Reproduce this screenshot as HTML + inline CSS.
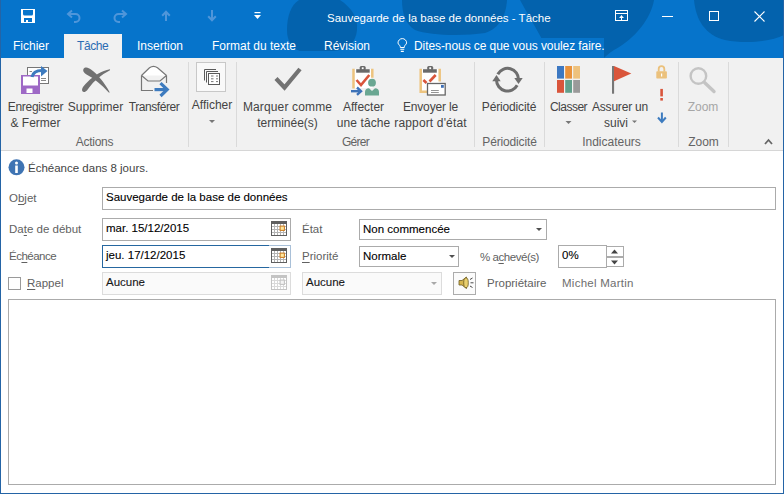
<!DOCTYPE html>
<html><head><meta charset="utf-8">
<style>
*{margin:0;padding:0;box-sizing:border-box}
html,body{width:784px;height:494px;overflow:hidden;background:#fff}
body{position:relative;font-family:"Liberation Sans",sans-serif;font-size:12px;color:#444}
.a{position:absolute}
.t{position:absolute;white-space:nowrap;line-height:14px;font-size:12px}
.w{color:#fff}
u{text-decoration:underline;text-underline-offset:1.5px;text-decoration-thickness:1px}
#frame{position:absolute;left:0;top:0;width:784px;height:494px;border:1px solid #2464a6;border-top:0;pointer-events:none}
#title{position:absolute;left:0;top:0;width:784px;height:58px;background:#0674cb;overflow:hidden}
#ribbon{position:absolute;left:0;top:58px;width:784px;height:93px;background:#f1f1f1;border-bottom:1px solid #d6d6d6}
.sep{position:absolute;width:1px;background:#dadada;top:4px;height:85px}
.rb{color:#444}
.lbl{color:#616161;font-size:11.5px}
.box{position:absolute;border:1px solid #abadb3;background:#fff}
.c{position:absolute;text-align:center;white-space:nowrap;line-height:14px;color:#444}
.gl{color:#646464}
.ft{position:absolute;white-space:nowrap;font-size:11.5px;line-height:14px;color:#000;-webkit-text-stroke:0.1px #000}
</style></head><body>
<div id="title">
  <svg class="a" style="left:0;top:0" width="784" height="58">
    <g fill="#0362ad">
      <path d="M299 0 H340 C352 8 358 18 357 30 C356 42 348 50 334 51 H300 C291 48 287 40 287 30 C287 16 291 5 299 0Z"/>
      <path d="M402 0 H507 C506 15 500 28 485 33 C465 36 430 36 415 30 C405 24 402 12 402 0Z"/>
      <path d="M520 0 H654 C651 18 636 38 614 50 C609 53 606 56 604 58 H552 C543 40 530 18 520 0Z"/>
      <path d="M694 0 H784 V35 C770 42 745 44 725 40 C705 35 696 20 694 0Z"/>
    </g>
  </svg>
  <!-- save icon -->
  <svg class="a" style="left:21px;top:9px" width="14" height="14">
    <rect x="0" y="0" width="14" height="14" fill="#fff"/>
    <path d="M2 1 H12 V5 Q12 6.6 10.5 6.6 H3.5 Q2 6.6 2 5Z" fill="#0674cb"/>
    <rect x="3" y="9" width="8" height="4" fill="#0674cb"/>
    <rect x="5" y="11" width="2" height="2" fill="#fff"/>
  </svg>
  <!-- undo -->
  <svg class="a" style="left:66px;top:9px" width="16" height="14">
    <path d="M3 5 H9.5 A4 4 0 0 1 9.5 13 H8" fill="none" stroke="#4f96da" stroke-width="2"/>
    <path d="M6 1.5 L2 5 L6 8.5" fill="none" stroke="#4f96da" stroke-width="2"/>
  </svg>
  <!-- redo -->
  <svg class="a" style="left:112px;top:9px" width="16" height="14">
    <path d="M13 5 H6.5 A4 4 0 0 0 6.5 13 H8" fill="none" stroke="#4f96da" stroke-width="2"/>
    <path d="M10 1.5 L14 5 L10 8.5" fill="none" stroke="#4f96da" stroke-width="2"/>
  </svg>
  <!-- up -->
  <svg class="a" style="left:161px;top:10px" width="10" height="12">
    <path d="M5 2 V11" stroke="#4f96da" stroke-width="2"/>
    <path d="M1.2 5.8 L5 1.8 L8.8 5.8" fill="none" stroke="#4f96da" stroke-width="2"/>
  </svg>
  <!-- down -->
  <svg class="a" style="left:207px;top:10px" width="10" height="12">
    <path d="M5 0 V10" stroke="#4f96da" stroke-width="2"/>
    <path d="M1.2 6.2 L5 10.2 L8.8 6.2" fill="none" stroke="#4f96da" stroke-width="2"/>
  </svg>
  <!-- customize -->
  <svg class="a" style="left:254px;top:12px" width="8" height="8">
    <rect x="0.5" y="0" width="6" height="1.2" fill="#fff"/>
    <path d="M0 3 H7 L3.5 7Z" fill="#fff"/>
  </svg>
  <div class="t w" style="left:327px;top:11px;font-size:11.5px">Sauvegarde de la base de données - Tâche</div>
  <!-- window controls -->
  <svg class="a" style="left:615px;top:10px" width="14" height="12">
    <rect x="0.5" y="0.5" width="12" height="10" fill="none" stroke="#fff"/>
    <path d="M0.5 3.5 H12.5" stroke="#fff"/>
    <path d="M6.5 10 V5.5" stroke="#fff"/><path d="M4 8 L6.5 5.2 L9 8Z" fill="#fff"/>
  </svg>
  <svg class="a" style="left:662px;top:16px" width="11" height="1"><rect x="0" y="0" width="11" height="1" fill="#fff"/></svg>
  <svg class="a" style="left:709px;top:11px" width="10" height="10"><rect x="0.5" y="0.5" width="9" height="9" fill="none" stroke="#fff"/></svg>
  <svg class="a" style="left:754px;top:11px" width="11" height="11"><path d="M0.5 0.5 L10.5 10.5 M10.5 0.5 L0.5 10.5" stroke="#fff" stroke-width="1.1"/></svg>
  <!-- tabs -->
  <div class="t w" style="left:13px;top:39px">Fichier</div>
  <div class="a" style="left:64px;top:34px;width:58px;height:24px;background:#f1f1f1"></div>
  <div class="t" style="left:77px;top:39px;color:#2b6cb3;letter-spacing:-0.4px">Tâche</div>
  <div class="t w" style="left:137px;top:39px">Insertion</div>
  <div class="t w" style="left:212px;top:39px">Format du texte</div>
  <div class="t w" style="left:324px;top:39px">Révision</div>
  <div class="a" style="left:392px;top:38px;width:212px;height:20px;background:#0674cb"></div>
  <svg class="a" style="left:397px;top:38px" width="12" height="15">
    <path d="M3.3 9.5 V8.8 C3.3 7.4 1 6.4 1 4.9 A4.3 4.3 0 1 1 9.6 4.9 C9.6 6.4 7.3 7.4 7.3 8.8 V9.5 Z" fill="none" stroke="#fff" stroke-width="1"/>
    <path d="M3.3 11.2 H7.3 M3.8 13.4 H6.8" stroke="#fff" stroke-width="1.1"/>
  </svg>
  <div class="t w" style="left:414px;top:39px;letter-spacing:-0.08px">Dites-nous ce que vous voulez faire.</div>
</div>


<div id="ribbon">
  <div class="sep" style="left:188px"></div>
  <div class="sep" style="left:236px"></div>
  <div class="sep" style="left:474px"></div>
  <div class="sep" style="left:544px"></div>
  <div class="sep" style="left:678px"></div>
  <div class="sep" style="left:728px"></div>
</div>
<svg class="a" style="left:0;top:58px" width="784" height="92">
 <g transform="translate(0,-58)">
  <!-- Enregistrer & Fermer -->
  <rect x="27.5" y="67.5" width="21" height="16" fill="#fff" stroke="#777" stroke-width="1"/>
  <path d="M41 78.5 H46 M41 80.5 H46 M29.5 71.5 H32" stroke="#888" stroke-width="1"/>
  <rect x="21" y="75" width="19" height="19" fill="#9e69c6"/>
  <rect x="23" y="76.5" width="15" height="9" fill="#fff"/>
  <rect x="26.5" y="88.5" width="6" height="4.5" fill="#fff"/>
  <path d="M32 77 C33 72 37 70.5 42 70.5" fill="none" stroke="#3d7bbf" stroke-width="3.2"/>
  <path d="M41 66 L47.5 71 L41 76.5Z" fill="#3d7bbf"/>
  <!-- Supprimer X -->
  <path d="M83.6 71.8 C82.6 69.6 83.8 67.5 86.4 67.6 C88 67.7 89.5 68.6 91 69.6 C98 74.5 104.5 83 109.8 92.4 C109.3 92.6 108.9 92.6 108.5 92.3 C101.5 84.5 94 78.5 86.5 74.5 C85.2 73.8 84.2 72.9 83.6 71.8Z" fill="#717171"/>
  <path d="M110 69.3 C110.2 69.8 110.1 70.3 109.6 70.6 C101 75 94 81 88.8 88 C87.6 89.8 86.4 91.4 84.8 91.9 C82.6 92.4 81.6 90.6 82.2 88.8 C83 86.5 85 84.4 87.5 82 C94 75.5 101.5 71 110 69.3Z" fill="#717171"/>
  <!-- Transferer -->
  <path d="M141.5 75.5 L149.5 67.8 Q153.5 65 157.5 67.8 L166.5 75.5" fill="#fff" stroke="#777" stroke-width="1.2"/>
  <path d="M141.5 75.5 V90.5 H153 M166.5 75.5 V83" fill="none" stroke="#777" stroke-width="1.2"/>
  <path d="M141.5 75.5 L148 81 H160 L166.5 75.5" fill="none" stroke="#777" stroke-width="1.2"/>
  <path d="M154.5 89.6 H167" stroke="#3d7bbf" stroke-width="3.2"/>
  <path d="M160.5 83.2 L167.2 89.6 L160.5 96" fill="none" stroke="#3d7bbf" stroke-width="3.2"/>
  <!-- Afficher box -->
  <rect x="196.5" y="62.5" width="29" height="29" fill="#f9f9f9" stroke="#c8c8c8"/>
  <path d="M204.5 80.5 V69.5 H216 M206.5 82.5 V71.5 H218" fill="none" stroke="#5a5a5a" stroke-width="1"/>
  <rect x="208.5" y="73.5" width="11" height="11" fill="#fff" stroke="#5a5a5a" stroke-width="1"/>
  <path d="M211 76 H213.5 M216 76 H218 M211 78.8 H213.5 M216 78.8 H218 M211 81.6 H213.5 M216 81.6 H218" stroke="#777" stroke-width="1"/>
  <path d="M209 120 H215 L212 123Z" fill="#777"/>
  <!-- Marquer check -->
  <path d="M276 78.5 L284.5 87.5 L300 69" fill="none" stroke="#737373" stroke-width="4.2"/>
  <!-- Affecter -->
  <rect x="353.5" y="69" width="19" height="19" fill="#fff"/>
  <path d="M353.5 68.8 V88.5 M372.3 68.8 V77.7" stroke="#edc47f" stroke-width="2.5"/>
  <path d="M356.2 69.2 H369.7 V72.7 H356.2Z" fill="#6a6a6a"/>
  <rect x="359.7" y="66" width="6" height="4.5" rx="1.5" fill="#6a6a6a"/>
  <rect x="361.8" y="67.3" width="1.8" height="1.8" fill="#fff"/>
  <path d="M356.5 80 L361 85 L369.3 75" fill="none" stroke="#d9553b" stroke-width="2.6"/>
  <circle cx="372" cy="82.7" r="3.9" fill="#6aa792"/>
  <path d="M365 95.5 V92 Q365 88.5 369 88.3 L372 91 L375 88.3 Q379 88.5 379 92 V95.5Z" fill="#6aa792"/>
  <path d="M351 91.2 H359.5" stroke="#3d72b8" stroke-width="2.4"/>
  <path d="M357 87.5 L361 91.2 L357 94.8" fill="none" stroke="#3d72b8" stroke-width="2.4"/>
  <!-- Envoyer rapport -->
  <rect x="420.5" y="69" width="19" height="23" fill="#fff"/>
  <path d="M420.7 68.8 V91.7 H427 M439.7 68.8 V81.5" fill="none" stroke="#edc47f" stroke-width="2.5"/>
  <path d="M423 69.2 H436.8 V72.7 H423Z" fill="#6a6a6a"/>
  <rect x="427.2" y="66" width="6" height="4.5" rx="1.5" fill="#6a6a6a"/>
  <rect x="429.3" y="67.3" width="1.8" height="1.8" fill="#fff"/>
  <path d="M423.4 80 L426.5 83 M429.5 81.5 L435.7 75" fill="none" stroke="#d9553b" stroke-width="2.6"/>
  <rect x="427.5" y="83.5" width="17.7" height="11.5" fill="#fff" stroke="#666" stroke-width="1.3"/>
  <rect x="441" y="85" width="2.8" height="2.8" fill="#3d6fb6"/>
  <path d="M431 90.5 H438.8 M431 92.5 H438.8" stroke="#888" stroke-width="0.9"/>
  <!-- Periodicite -->
  <path d="M497.8 74.2 A11 11 0 0 1 518.5 79.8" fill="none" stroke="#6e6e6e" stroke-width="3"/>
  <path d="M514.3 78 H522.7 L518.5 84Z" fill="#6e6e6e"/>
  <path d="M496.5 80 A11 11 0 0 0 517.2 85.2" fill="none" stroke="#6e6e6e" stroke-width="3"/>
  <path d="M492.3 81.2 H500.7 L496.5 75Z" fill="#6e6e6e"/>
  <!-- Classer -->
  <rect x="557" y="66" width="7" height="12.6" fill="#3c78c2"/>
  <rect x="565.2" y="66" width="6.8" height="12.6" fill="#e9923b"/>
  <rect x="573.2" y="66" width="6.8" height="12.6" fill="#eec17c"/>
  <rect x="557" y="80" width="7" height="12.8" fill="#d9553b"/>
  <rect x="565.2" y="80" width="6.8" height="12.8" fill="#62a08c"/>
  <rect x="573.2" y="80" width="6.8" height="12.8" fill="#9a9a9a"/>
  <path d="M565.5 121 H571.5 L568.5 124Z" fill="#777"/>
  <!-- Flag -->
  <rect x="612" y="66" width="2.1" height="27.7" fill="#777"/>
  <path d="M614 66 L631.3 73.5 L614 81.3Z" fill="#d9553b"/>
  <path d="M632 120.5 H637 L634.5 123Z" fill="#777"/>
  <!-- lock -->
  <path d="M658.7 71.5 V69 A2.8 2.8 0 0 1 664.3 69 V71.5" fill="none" stroke="#ebc17c" stroke-width="1.8"/>
  <rect x="656.3" y="71.2" width="10.6" height="7.4" rx="0.8" fill="#ebc17c"/>
  <rect x="661" y="73.5" width="1.2" height="3" fill="#fff"/>
  <!-- ! -->
  <rect x="660.3" y="88.9" width="2.6" height="7.5" fill="#d9553b"/>
  <rect x="660.3" y="98" width="2.6" height="2.6" fill="#d9553b"/>
  <!-- down arrow -->
  <path d="M661.9 112.5 V122" stroke="#3d7bbf" stroke-width="2"/>
  <path d="M658 117.5 L661.9 122 L665.8 117.5" fill="none" stroke="#3d7bbf" stroke-width="2"/>
  <!-- Zoom -->
  <circle cx="698.4" cy="76" r="7.8" fill="none" stroke="#c4c4c4" stroke-width="2.4"/>
  <path d="M704.5 82.5 L714 91.5" stroke="#c4c4c4" stroke-width="3.4" stroke-linecap="round"/>
  <!-- collapse caret -->
  <path d="M765 144 L768.5 140 L772 144" fill="none" stroke="#666" stroke-width="1.8"/>
 </g>
</svg>
<div class="c" style="left:0px;width:71px;top:100px;letter-spacing:-0.3px">Enregistrer</div>
<div class="c" style="left:0px;width:71px;top:116px">&amp; Fermer</div>
<div class="c" style="left:65px;width:61px;top:100px">Supprimer</div>
<div class="c" style="left:124px;width:60px;top:100px;letter-spacing:-0.45px">Transférer</div>
<div class="c" style="left:188px;width:48px;top:98px">Afficher</div>
<div class="c" style="left:237px;width:101px;top:100px;letter-spacing:0.14px">Marquer comme</div>
<div class="c" style="left:237px;width:101px;top:116px">terminée(s)</div>
<div class="c" style="left:333px;width:61px;top:100px">Affecter</div>
<div class="c" style="left:333px;width:61px;top:116px;letter-spacing:0.1px">une tâche</div>
<div class="c" style="left:390px;width:81px;top:100px;letter-spacing:-0.15px">Envoyer le</div>
<div class="c" style="left:390px;width:81px;top:116px;letter-spacing:0.15px">rapport d'état</div>
<div class="c" style="left:476px;width:66px;top:100px;letter-spacing:-0.15px">Périodicité</div>
<div class="c" style="left:546px;width:45px;top:100px;letter-spacing:-0.5px">Classer</div>
<div class="c" style="left:590px;width:60px;top:100px;letter-spacing:-0.2px">Assurer un</div>
<div class="c" style="left:590px;width:52px;top:116px">suivi</div>
<div class="c" style="left:680px;width:46px;top:100px;color:#a6a6a6">Zoom</div>
<div class="c gl" style="left:1px;width:187px;top:135px;letter-spacing:-0.25px">Actions</div>
<div class="c gl" style="left:237px;width:237px;top:135px;letter-spacing:-0.7px">Gérer</div>
<div class="c gl" style="left:475px;width:69px;top:135px;letter-spacing:-0.15px">Périodicité</div>
<div class="c gl" style="left:545px;width:133px;top:135px">Indicateurs</div>
<div class="c gl" style="left:679px;width:49px;top:135px">Zoom</div>


<!-- info bar -->
<svg class="a" style="left:8px;top:159px" width="17" height="17">
  <circle cx="8.5" cy="8.3" r="8" fill="#3f74b3"/>
  <rect x="7.2" y="6.5" width="2.6" height="7.5" fill="#fff"/>
  <circle cx="8.5" cy="4" r="1.5" fill="#fff"/>
</svg>
<div class="t" style="left:28px;top:161px;color:#444;font-size:11.5px">Échéance dans 8 jours.</div>

<div class="t lbl" style="left:9px;top:191px">O<u>b</u>jet</div>
<div class="box" style="left:102px;top:187px;width:674px;height:23px;border-color:#ababab"></div>
<div class="ft" style="left:106px;top:190px">Sauvegarde de la base de données</div>

<div class="t lbl" style="left:9px;top:222px">Da<u>t</u>e de début</div>
<div class="box" style="left:102px;top:218px;width:189px;height:23px;border-color:#ababab"></div>
<div class="ft" style="left:106px;top:221px">mar. 15/12/2015</div>
<svg class="a" style="left:271px;top:221px" width="16" height="15"><rect x="0" y="0" width="16" height="15" fill="#5f5f5f"/><rect x="1" y="3" width="14" height="11" fill="#b4b4b4"/><rect x="1" y="3" width="2" height="2" fill="#fff"/><rect x="4" y="3" width="2" height="2" fill="#fff"/><rect x="7" y="3" width="2" height="2" fill="#fff"/><rect x="10" y="3" width="2" height="2" fill="#fff"/><rect x="13" y="3" width="2" height="2" fill="#fff"/><rect x="1" y="6" width="2" height="2" fill="#fff"/><rect x="4" y="6" width="2" height="2" fill="#fff"/><rect x="7" y="6" width="2" height="2" fill="#fff"/><rect x="10" y="6" width="2" height="2" fill="#fff"/><rect x="13" y="6" width="2" height="2" fill="#fff"/><rect x="1" y="9" width="2" height="2" fill="#fff"/><rect x="4" y="9" width="2" height="2" fill="#fff"/><rect x="7" y="9" width="2" height="2" fill="#fff"/><rect x="10" y="9" width="2" height="2" fill="#fff"/><rect x="13" y="9" width="2" height="2" fill="#fff"/><rect x="1" y="12" width="2" height="2" fill="#fff"/><rect x="4" y="12" width="2" height="2" fill="#fff"/><rect x="7" y="12" width="2" height="2" fill="#fff"/><rect x="10" y="12" width="2" height="2" fill="#fff"/><rect x="13" y="12" width="2" height="2" fill="#fff"/><rect x="9.1" y="5.1" width="4.3" height="4.3" fill="#ffe9a0" stroke="#cf8128" stroke-width="1.1"/></svg>

<div class="t lbl" style="left:9px;top:249px;letter-spacing:-0.5px">Éc<u>h</u>éance</div>
<div class="box" style="left:102px;top:245px;width:189px;height:23px;border-color:#a9c0d8"></div>
<div class="a" style="left:102px;top:245px;width:167px;height:23px;border:1px solid #2667a0;border-right:0"></div>
<div class="ft" style="left:106px;top:248px">jeu. 17/12/2015</div>
<svg class="a" style="left:271px;top:248px" width="16" height="15"><rect x="0" y="0" width="16" height="15" fill="#5f5f5f"/><rect x="1" y="3" width="14" height="11" fill="#b4b4b4"/><rect x="1" y="3" width="2" height="2" fill="#fff"/><rect x="4" y="3" width="2" height="2" fill="#fff"/><rect x="7" y="3" width="2" height="2" fill="#fff"/><rect x="10" y="3" width="2" height="2" fill="#fff"/><rect x="13" y="3" width="2" height="2" fill="#fff"/><rect x="1" y="6" width="2" height="2" fill="#fff"/><rect x="4" y="6" width="2" height="2" fill="#fff"/><rect x="7" y="6" width="2" height="2" fill="#fff"/><rect x="10" y="6" width="2" height="2" fill="#fff"/><rect x="13" y="6" width="2" height="2" fill="#fff"/><rect x="1" y="9" width="2" height="2" fill="#fff"/><rect x="4" y="9" width="2" height="2" fill="#fff"/><rect x="7" y="9" width="2" height="2" fill="#fff"/><rect x="10" y="9" width="2" height="2" fill="#fff"/><rect x="13" y="9" width="2" height="2" fill="#fff"/><rect x="1" y="12" width="2" height="2" fill="#fff"/><rect x="4" y="12" width="2" height="2" fill="#fff"/><rect x="7" y="12" width="2" height="2" fill="#fff"/><rect x="10" y="12" width="2" height="2" fill="#fff"/><rect x="13" y="12" width="2" height="2" fill="#fff"/><rect x="9.1" y="5.1" width="4.3" height="4.3" fill="#ffe9a0" stroke="#cf8128" stroke-width="1.1"/></svg>

<div class="a" style="left:8px;top:277px;width:13px;height:13px;border:1px solid #9a9a9a;background:#fff"></div>
<div class="t lbl" style="left:27px;top:276px"><u>R</u>appel</div>
<div class="box" style="left:102px;top:272px;width:189px;height:23px;border-color:#dcdcdc;background:#fafafa"></div>
<div class="ft" style="left:106px;top:275px;color:#222">Aucune</div>
<svg class="a" style="left:271px;top:275px" width="16" height="15"><rect x="0" y="0" width="16" height="15" fill="#c4c4c4"/><rect x="1" y="3" width="14" height="11" fill="#dadada"/><rect x="1" y="3" width="2" height="2" fill="#fff"/><rect x="4" y="3" width="2" height="2" fill="#fff"/><rect x="7" y="3" width="2" height="2" fill="#fff"/><rect x="10" y="3" width="2" height="2" fill="#fff"/><rect x="13" y="3" width="2" height="2" fill="#fff"/><rect x="1" y="6" width="2" height="2" fill="#fff"/><rect x="4" y="6" width="2" height="2" fill="#fff"/><rect x="7" y="6" width="2" height="2" fill="#fff"/><rect x="10" y="6" width="2" height="2" fill="#fff"/><rect x="13" y="6" width="2" height="2" fill="#fff"/><rect x="1" y="9" width="2" height="2" fill="#fff"/><rect x="4" y="9" width="2" height="2" fill="#fff"/><rect x="7" y="9" width="2" height="2" fill="#fff"/><rect x="10" y="9" width="2" height="2" fill="#fff"/><rect x="13" y="9" width="2" height="2" fill="#fff"/><rect x="1" y="12" width="2" height="2" fill="#fff"/><rect x="4" y="12" width="2" height="2" fill="#fff"/><rect x="7" y="12" width="2" height="2" fill="#fff"/><rect x="10" y="12" width="2" height="2" fill="#fff"/><rect x="13" y="12" width="2" height="2" fill="#fff"/><rect x="9.1" y="5.1" width="4.3" height="4.3" fill="#f4f4f4" stroke="#c4c4c4" stroke-width="1.1"/></svg>

<div class="t lbl" style="left:302px;top:222px">État</div>
<div class="box" style="left:359px;top:219px;width:188px;height:21px;border-color:#ababab"></div>
<div class="ft" style="left:363px;top:222px">Non commencée</div>
<svg class="a" style="left:536px;top:228px" width="6" height="4"><path d="M0 0 H6 L3 3Z" fill="#505050"/></svg>

<div class="t lbl" style="left:302px;top:249px"><u>P</u>riorité</div>
<div class="box" style="left:359px;top:246px;width:100px;height:21px;border-color:#ababab"></div>
<div class="ft" style="left:363px;top:249px">Normale</div>
<svg class="a" style="left:449px;top:255px" width="6" height="4"><path d="M0 0 H6 L3 3Z" fill="#505050"/></svg>

<div class="t lbl" style="left:480px;top:250px;letter-spacing:-0.45px">% a<u>c</u>hevé(s)</div>
<div class="box" style="left:558px;top:245px;width:49px;height:23px;border-color:#ababab"></div>
<div class="ft" style="left:562px;top:248px">0%</div>
<div class="box" style="left:606px;top:246px;width:18px;height:11px;border-color:#ababab"></div>
<div class="box" style="left:606px;top:257px;width:18px;height:10px;border-color:#ababab"></div>
<svg class="a" style="left:611px;top:249px" width="8" height="5"><path d="M0 4.5 H7 L3.5 0.5Z" fill="#444"/></svg>
<svg class="a" style="left:611px;top:260px" width="8" height="5"><path d="M0 0.5 H7 L3.5 4.5Z" fill="#444"/></svg>

<div class="box" style="left:302px;top:272px;width:140px;height:23px;border-color:#dcdcdc;background:#fafafa"></div>
<div class="ft" style="left:306px;top:275px;color:#222">Aucune</div>
<svg class="a" style="left:431px;top:282px" width="6" height="4"><path d="M0 0 H6 L3 3Z" fill="#a8a8a8"/></svg>

<div class="box" style="left:453px;top:272px;width:23px;height:23px;border-color:#acacac;background:#fbfbfb"></div>
<svg class="a" style="left:458px;top:276px" width="17" height="14">
  <path d="M1 4.5 H4 L8.5 1 V12.5 L4 9 H1Z" fill="#d6b54e" stroke="#6b5a22" stroke-width="0.8"/>
  <ellipse cx="8" cy="6.8" rx="2.3" ry="5" fill="#e9cf6e" stroke="#6b5a22" stroke-width="0.8"/>
  <path d="M12 3.5 L14.5 2 M12.5 6.8 H15.5 M12 10 L14.5 11.5" stroke="#333" stroke-width="0.9"/>
</svg>
<div class="t lbl" style="left:487px;top:276px">Propriétaire</div>
<div class="t lbl" style="left:562px;top:276px;color:#6e6e6e;letter-spacing:0.25px">Michel Martin</div>

<div class="box" style="left:8px;top:299px;width:768px;height:186px;border-color:#ababab"></div>
<div id="frame"></div>
</body></html>
